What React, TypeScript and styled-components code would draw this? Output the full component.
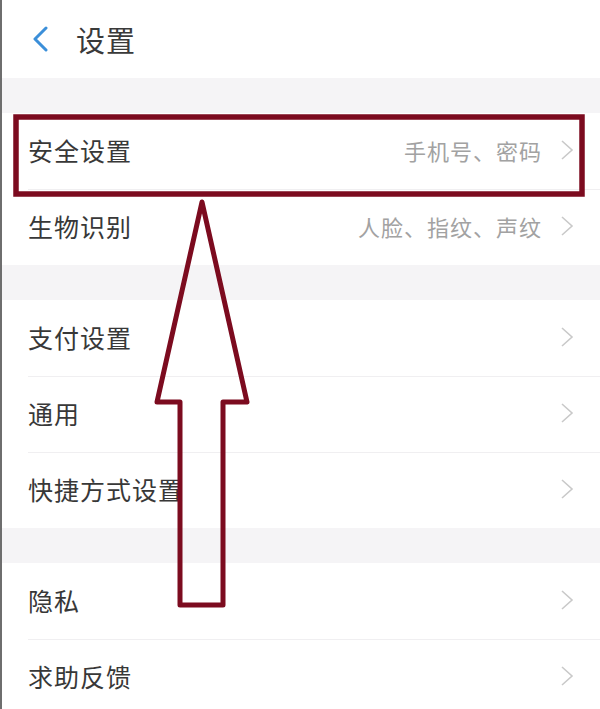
import React from 'react'
import styled, { createGlobalStyle } from 'styled-components'

const GlobalStyle = createGlobalStyle`
  html, body {
    margin: 0;
    padding: 0;
    background: #f5f4f6;
  }
  body {
    font-family: "Noto Sans CJK SC", "Noto Sans", sans-serif;
  }
`

const Page = styled.div`
  position: relative;
  width: 600px;
  height: 709px;
  overflow: hidden;
  background: #f5f4f6;
  border-left: 2px solid #6e6e6e;
  box-sizing: border-box;
`

const Header = styled.header`
  height: 78px;
  background: #ffffff;
  display: flex;
  align-items: center;
  padding-left: 28px;
  gap: 26px;
`

const Title = styled.h1`
  margin: 0;
  font-size: 29px;
  font-weight: 400;
  color: #3a3a3a;
  line-height: 1;
  letter-spacing: 1px;
`

const Band = styled.div`
  height: 35px;
`

const Group = styled.section`
  background: #ffffff;
`

const Row = styled.div<{ $first?: boolean }>`
  height: 76px;
  display: flex;
  align-items: center;
  margin-left: 26px;
  padding-right: 26px;
  padding-bottom: 3px;
  border-top: ${(p) => (p.$first ? 'none' : '1px solid #f0eff1')};
  box-sizing: border-box;
`

const Label = styled.span`
  flex: 1;
  font-size: 25px;
  color: #383838;
  letter-spacing: 1px;
`

const Sub = styled.span`
  font-size: 22px;
  color: #a2a2a2;
  margin-right: 18px;
  letter-spacing: 1px;
`

const Overlay = styled.svg`
  position: absolute;
  left: 0;
  top: 0;
  pointer-events: none;
`

const Chevron = () => (
  <svg width="14" height="22" viewBox="0 0 14 22">
    <path d="M2 2 L12 11 L2 20" fill="none" stroke="#c9c9c9" strokeWidth="1.6" />
  </svg>
)

const BackIcon = () => (
  <svg width="20" height="26" viewBox="0 0 20 26">
    <path d="M16 2 L5 13 L16 24" fill="none" stroke="#3b8fd9" strokeWidth="3" strokeLinecap="round" strokeLinejoin="round" />
  </svg>
)

const groups: { label: string; sub?: string }[][] = [
  [
    { label: '安全设置', sub: '手机号、密码' },
    { label: '生物识别', sub: '人脸、指纹、声纹' },
  ],
  [{ label: '支付设置' }, { label: '通用' }, { label: '快捷方式设置' }],
  [{ label: '隐私' }, { label: '求助反馈' }],
]

export default function App() {
  return (
    <>
      <GlobalStyle />
      <Page>
        <Header>
          <BackIcon />
          <Title>设置</Title>
        </Header>
        {groups.map((items, gi) => (
          <React.Fragment key={gi}>
            <Band />
            <Group>
              {items.map((it, i) => (
                <Row key={it.label} $first={i === 0}>
                  <Label>{it.label}</Label>
                  {it.sub && <Sub>{it.sub}</Sub>}
                  <Chevron />
                </Row>
              ))}
            </Group>
          </React.Fragment>
        ))}
        <Overlay width="600" height="709" viewBox="0 0 600 709">
          <rect x="14" y="117" width="566" height="77" fill="none" stroke="#7c0b1f" strokeWidth="5.5" />
          <polygon
            points="200,202 245,402 221,402 221,605 178,605 178,402 155,402"
            fill="none"
            stroke="#7c0b1f"
            strokeWidth="5"
            strokeLinejoin="round"
          />
        </Overlay>
      </Page>
    </>
  )
}
